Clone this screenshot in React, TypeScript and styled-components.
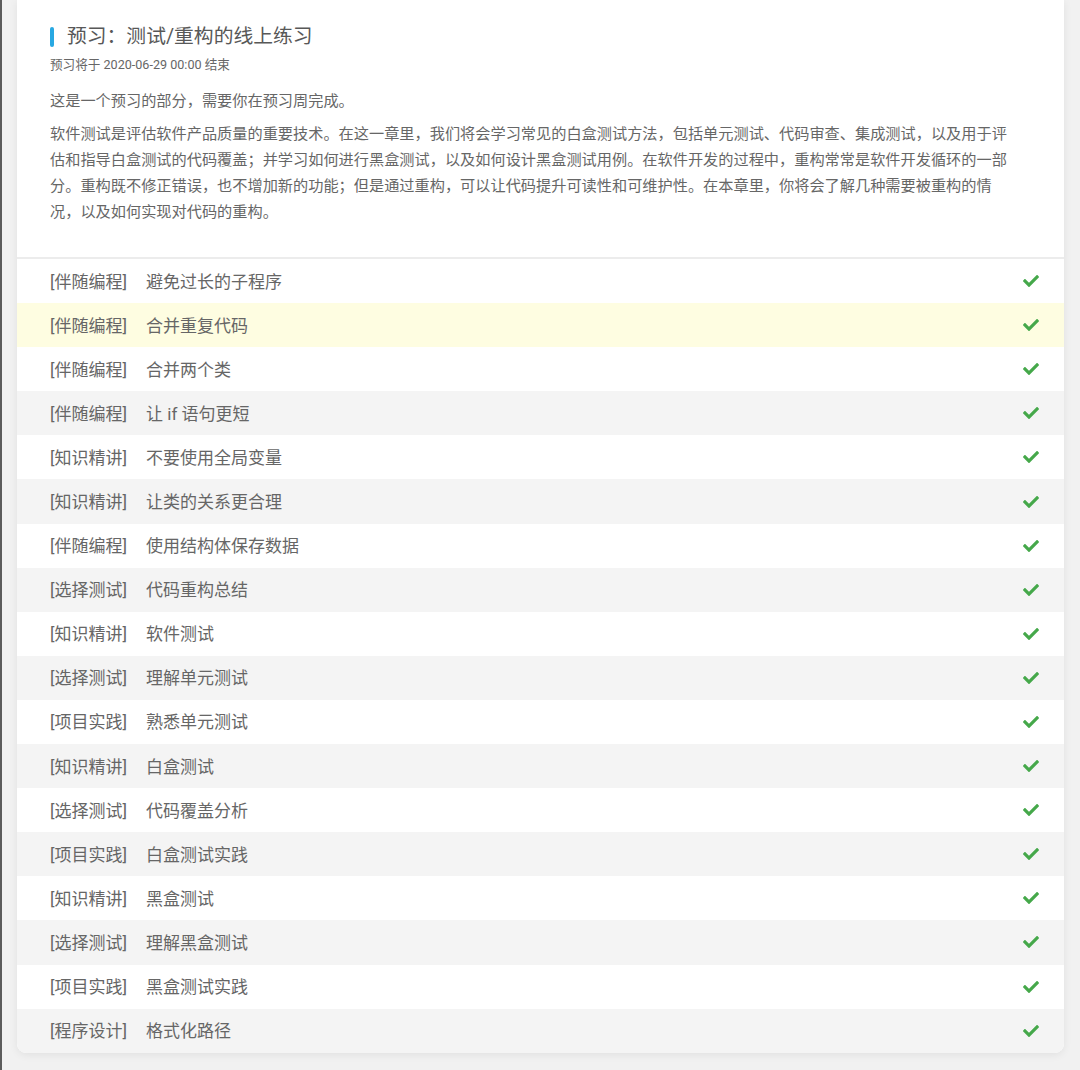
import React from "react";
import styled, { createGlobalStyle } from "styled-components";
import { FaCheck } from "react-icons/fa";

const GlobalStyle = createGlobalStyle`
  html, body {
    margin: 0;
    padding: 0;
    background: #f1f1f1;
  }
  body {
    font-family: Roboto, "Noto Sans CJK SC", "Noto Sans", sans-serif;
  }
`;

const Page = styled.div`
  min-height: 1070px;
  box-sizing: border-box;
  border-left: 2px solid #5c5c5c;
  padding: 0 16px 0 15px;
  background: #f1f1f1;
`;

const Card = styled.div`
  background: #ffffff;
  border-radius: 0 0 9px 9px;
  box-shadow: 0 2px 8px rgba(0, 0, 0, 0.07);
  overflow: hidden;
`;

const Header = styled.div`
  padding: 25px 49px 32px 33px;
  border-bottom: 2px solid #ececec;
`;

const TitleRow = styled.div`
  display: flex;
  align-items: center;
  gap: 13px;
  height: 24px;
`;

const Bar = styled.span`
  width: 4px;
  height: 20px;
  border-radius: 2px;
  background: #28a8e2;
`;

const Title = styled.h1`
  margin: 0;
  font-size: 19.8px;
  font-weight: 400;
  line-height: 24px;
  color: #585858;
`;

const Deadline = styled.div`
  margin-top: 7px;
  font-size: 12.6px;
  line-height: 18px;
  color: #666;
`;

const Para = styled.p<{ $gap: number }>`
  margin: ${(p) => p.$gap}px 0 0;
  font-size: 15.2px;
  line-height: 26px;
  color: #666;
`;

const Row = styled.div<{ $tone: "white" | "gray" | "hl" }>`
  display: flex;
  align-items: center;
  height: 44.1px;
  padding: 0 25px 2px 33px;
  box-sizing: border-box;
  background: ${(p) =>
    p.$tone === "hl" ? "#fefde1" : p.$tone === "gray" ? "#f4f4f4" : "#ffffff"};
  font-size: 17px;
  color: #666;
`;

const Tag = styled.span`
  margin-right: 19px;
`;

const Name = styled.span`
  flex: 1;
`;

const Check = styled(FaCheck)`
  color: #45a84a;
  width: 16px;
  height: 16px;
  margin-top: 2px;
`;

const items: [string, string][] = [
  ["伴随编程", "避免过长的子程序"],
  ["伴随编程", "合并重复代码"],
  ["伴随编程", "合并两个类"],
  ["伴随编程", "让 if 语句更短"],
  ["知识精讲", "不要使用全局变量"],
  ["知识精讲", "让类的关系更合理"],
  ["伴随编程", "使用结构体保存数据"],
  ["选择测试", "代码重构总结"],
  ["知识精讲", "软件测试"],
  ["选择测试", "理解单元测试"],
  ["项目实践", "熟悉单元测试"],
  ["知识精讲", "白盒测试"],
  ["选择测试", "代码覆盖分析"],
  ["项目实践", "白盒测试实践"],
  ["知识精讲", "黑盒测试"],
  ["选择测试", "理解黑盒测试"],
  ["项目实践", "黑盒测试实践"],
  ["程序设计", "格式化路径"],
];

export default function App() {
  return (
    <>
      <GlobalStyle />
      <Page>
        <Card>
          <Header>
            <TitleRow>
              <Bar />
              <Title>预习：测试/重构的线上练习</Title>
            </TitleRow>
            <Deadline>预习将于 2020-06-29 00:00 结束</Deadline>
            <Para $gap={14}>这是一个预习的部分，需要你在预习周完成。</Para>
            <Para $gap={7}>
              软件测试是评估软件产品质量的重要技术。在这一章里，我们将会学习常见的白盒测试方法，包括单元测试、代码审查、集成测试，以及用于评估和指导白盒测试的代码覆盖；并学习如何进行黑盒测试，以及如何设计黑盒测试用例。在软件开发的过程中，重构常常是软件开发循环的一部分。重构既不修正错误，也不增加新的功能；但是通过重构，可以让代码提升可读性和可维护性。在本章里，你将会了解几种需要被重构的情况，以及如何实现对代码的重构。
            </Para>
          </Header>
          {items.map(([tag, name], i) => (
            <Row key={i} $tone={i === 1 ? "hl" : i % 2 === 1 ? "gray" : "white"}>
              <Tag>[{tag}]</Tag>
              <Name>{name}</Name>
              <Check />
            </Row>
          ))}
        </Card>
      </Page>
    </>
  );
}
